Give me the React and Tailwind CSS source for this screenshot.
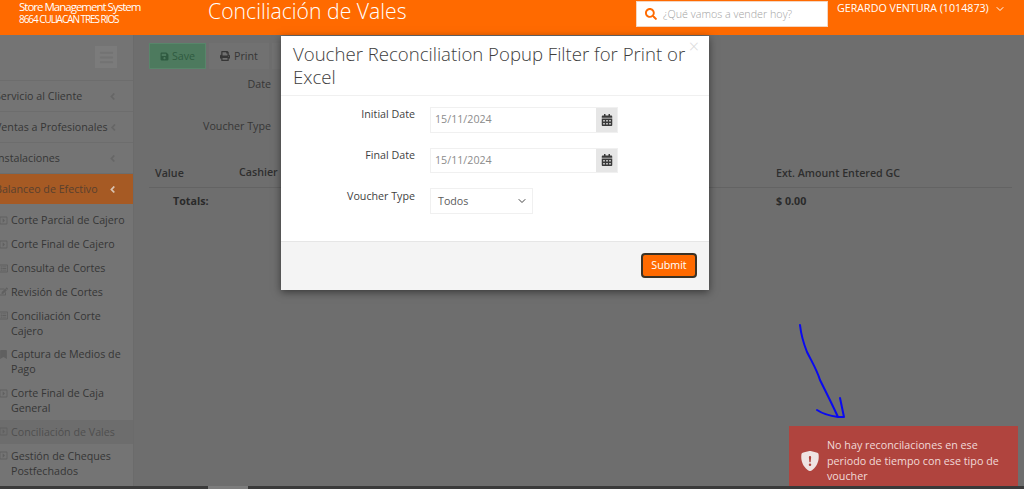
import React from 'react';
import {
    FaAngleLeft,
    FaBars,
    FaCalendarAlt,
    FaEdit,
    FaPrint,
    FaRegListAlt,
    FaRegCaretSquareRight,
    FaSave,
    FaSearch,
    FaBookmark,
} from 'react-icons/fa';
import { BsShieldFillExclamation } from 'react-icons/bs';
import { ChevronDown } from 'lucide-react';

const mainMenu = [
    { label: 'Servicio al Cliente' },
    { label: 'Ventas a Profesionales' },
    { label: 'Instalaciones' },
    { label: 'Balanceo de Efectivo', active: true },
];

const subMenu = [
    { label: 'Corte Parcial de Cajero', icon: FaRegCaretSquareRight },
    { label: 'Corte Final de Cajero', icon: FaRegCaretSquareRight },
    { label: 'Consulta de Cortes', icon: FaRegListAlt },
    { label: 'Revisión de Cortes', icon: FaEdit },
    { label: 'Conciliación Corte Cajero', icon: FaRegListAlt },
    { label: 'Captura de Medios de Pago', icon: FaBookmark },
    { label: 'Corte Final de Caja General', icon: FaRegCaretSquareRight },
    { label: 'Conciliación de Vales', icon: FaRegCaretSquareRight, current: true },
    { label: 'Gestión de Cheques Postfechados', icon: FaRegCaretSquareRight },
];

const Header = () => (
    <header className="h-[35px] shrink-0 bg-[#ff6a00] flex text-white">
        <div className="w-[208px] pl-[19px] shrink-0">
            <div className="text-[11.5px] leading-[13px] tracking-[-1px]">Store Management System</div>
            <div className="text-[10px] leading-[13px] tracking-[-1.05px] font-medium">8664 CULIACAN TRES RIOS</div>
        </div>
        <div className="w-[428px] shrink-0 text-[21.2px] leading-[22px] font-light">Conciliación de Vales</div>
        <div className="w-[192px] h-[26px] mt-px bg-white border border-[#f3d6c2] flex items-center pl-[8px] gap-[6px] shrink-0">
            <FaSearch className="text-[12px] text-[#ff6a00]" />
            <span className="text-[10.75px] text-[#a3a3a3] font-light">¿Qué vamos a vender hoy?</span>
        </div>
        <div className="pl-[9px] pt-[2px] flex items-start gap-[5px] text-[10.7px] leading-[13px]">
            <span>GERARDO VENTURA (1014873)</span>
            <ChevronDown size={12} strokeWidth={2} className="mt-px" />
        </div>
    </header>
);

const Sidebar = () => (
    <aside className="w-[134px] shrink-0 bg-[#747474] border-r border-[#6b6b6b] overflow-hidden text-[#363636]">
        <div className="h-[43px] pt-[11px] pr-[16px] flex justify-end">
            <div className="w-[22px] h-[22px] bg-[#7b7b7b] flex items-center justify-center text-[#737373]">
                <FaBars className="text-[15px]" />
            </div>
        </div>
        <div className="h-[2px]" />
        {/* Main entries: the text runs past the left edge of the window */}
        {mainMenu.map((item) => (
            <div
                key={item.label}
                className={`h-[31px] flex items-center justify-between pr-[15px] text-[10.7px] border-t border-[#6d6d6d] ${
                    item.active ? 'bg-[#a65a24] text-[#59402e]' : ''
                }`}
            >
                <span className="-ml-[5px] whitespace-nowrap">{item.label}</span>
                <FaAngleLeft className={`text-[11px] ${item.active ? 'text-[#d9c4b2]' : 'text-[#666666]'}`} />
            </div>
        ))}
        <div className="pt-[5px]">
            {subMenu.map((item) => (
                <div
                    key={item.label}
                    className={`flex pl-[11px] pr-[6px] py-[4.4px] text-[10.7px] leading-[15px] relative ${
                        item.current ? 'bg-[#6d6d6d] text-[#4f4f4f]' : ''
                    }`}
                >
                    <item.icon className="absolute -left-px top-[7px] text-[9px] text-[#606060]" />
                    <span>{item.label}</span>
                </div>
            ))}
        </div>
    </aside>
);

const Content = () => (
    <main className="flex-1 min-w-0 pl-[15px] pr-[12px] pt-[8px] text-[#363636] text-[10.7px]">
        <div className="flex h-[26px]">
            <div className="w-[57px] bg-[#4d7a5e] border border-[#58856a] text-[#2f5a40] flex items-center justify-center gap-[3px]">
                <FaSave className="text-[9px]" /> Save
            </div>
            <div className="ml-[3px] w-[60px] bg-[#717171] flex items-center justify-center gap-[4px]">
                <FaPrint className="text-[10px]" /> Print
            </div>
            <div className="ml-[3px] w-[20px] bg-[#717171]" />
        </div>
        <div className="mt-[7px] w-[122px] text-right leading-[16px]">Date</div>
        <div className="mt-[26px] w-[122px] text-right leading-[16px]">Voucher Type</div>
        <div className="mt-[33px] border-b border-[#636363] h-[21px] relative">
            <span className="absolute left-[6px] -top-[2px] font-semibold text-[#2e2e2e]">Value</span>
            <span className="absolute left-[90px] -top-[3px] font-semibold text-[#2e2e2e]">Cashier</span>
            <span className="absolute left-[627px] -top-[2px] font-semibold text-[#2e2e2e]">Ext. Amount Entered GC</span>
        </div>
        <div className="h-[26px] relative font-bold text-[#2a2a2a]">
            <span className="absolute left-[24px] top-[5px]">Totals:</span>
            <span className="absolute left-[627px] top-[5px]">$ 0.00</span>
        </div>
    </main>
);

const DateField = ({ label }) => (
    <div className="flex h-[25.5px] mb-[15px]">
        <label className="w-[134px] text-right text-[10.7px] leading-[14px] text-[#3f3f3f]">{label}</label>
        <div className="ml-[15px] w-[188px] flex border border-[#f0f0f0]">
            <div className="flex-1 pl-[4px] text-[10.7px] leading-[23px] text-[#8c8c8c]">15/11/2024</div>
            <div className="w-[21px] bg-[#e6e6e6] flex items-center justify-center text-[#3a3a3a]">
                <FaCalendarAlt className="text-[12px]" />
            </div>
        </div>
    </div>
);

const Modal = () => (
    <div className="absolute left-[281px] top-[36px] w-[428px] h-[254px] bg-white flex flex-col shadow-[0_2px_8px_rgba(0,0,0,0.5)]">
        <div className="h-[60px] shrink-0 border-b border-[#f0f0f0] pl-[12px] pr-[10px] pt-[6px] relative">
            <h2 className="w-[404px] text-[18.6px] leading-[23px] font-light text-[#3d3d3d]">
                Voucher Reconciliation Popup Filter for Print or Excel
            </h2>
            <span className="absolute right-[10px] top-[1px] text-[18px] leading-[18px] font-light text-[#d9d9d9]">×</span>
        </div>
        <div className="flex-1 pt-[11px]">
            <DateField label="Initial Date" />
            <DateField label="Final Date" />
            <div className="flex h-[26px]">
                <label className="w-[134px] text-right text-[10.7px] leading-[16px] text-[#3f3f3f]">Voucher Type</label>
                <div className="ml-[15px] w-[103px] border border-[#f0f0f0] flex items-center justify-between pl-[7px] pr-[4px] text-[10.7px] text-[#5c5c5c]">
                    <span>Todos</span>
                    <ChevronDown size={12} strokeWidth={2} className="text-[#444444]" />
                </div>
            </div>
        </div>
        <div className="h-[49px] shrink-0 bg-[#f4f4f4] border-t border-[#e6e6e6] flex justify-end items-start pt-[11px] pr-[12px]">
            <div className="w-[56px] h-[25px] bg-[#ff6a00] border-2 border-[#3a3226] rounded-[4px] text-white text-[10.7px] flex items-center justify-center">
                Submit
            </div>
        </div>
    </div>
);

const Toast = () => (
    <div className="absolute left-[789px] top-[426px] w-[229px] h-[60px] bg-[#b0443e] text-[#f0dad8] text-[10.75px] leading-[15.5px] flex items-center pl-[11px] pt-[9px]">
        <BsShieldFillExclamation className="text-[20px] shrink-0 text-[#efe3e2]" />
        <span className="ml-[7px] mt-[2px] w-[190px]">No hay reconcilaciones en ese periodo de tiempo con ese tipo de voucher</span>
    </div>
);

const App = () => (
    <div className="relative w-[1024px] h-[489px] overflow-hidden flex flex-col bg-[#6e6e6e] font-['Open_Sans',sans-serif]">
        <Header />
        <div className="flex flex-1 min-h-0">
            <Sidebar />
            <Content />
        </div>
        <div className="h-[3px] shrink-0 bg-[#3a3a3a] flex">
            <div className="ml-[208px] w-[40px] bg-[#7d7d7d]" />
        </div>
        <Modal />
        <svg className="absolute left-[790px] top-[318px]" width="64" height="106" viewBox="0 0 64 106" fill="none">
            <path
                d="M10 7 C11 16 13 24 17 34 C22 44 27 52 30 62 C36 74 42 86 48 99 L54 99 L50 80 M27 92 C33 96 40 98 48 99"
                stroke="#0a0af0"
                strokeWidth="2"
                strokeLinecap="round"
                strokeLinejoin="round"
            />
        </svg>
        <Toast />
    </div>
);

export default App;
